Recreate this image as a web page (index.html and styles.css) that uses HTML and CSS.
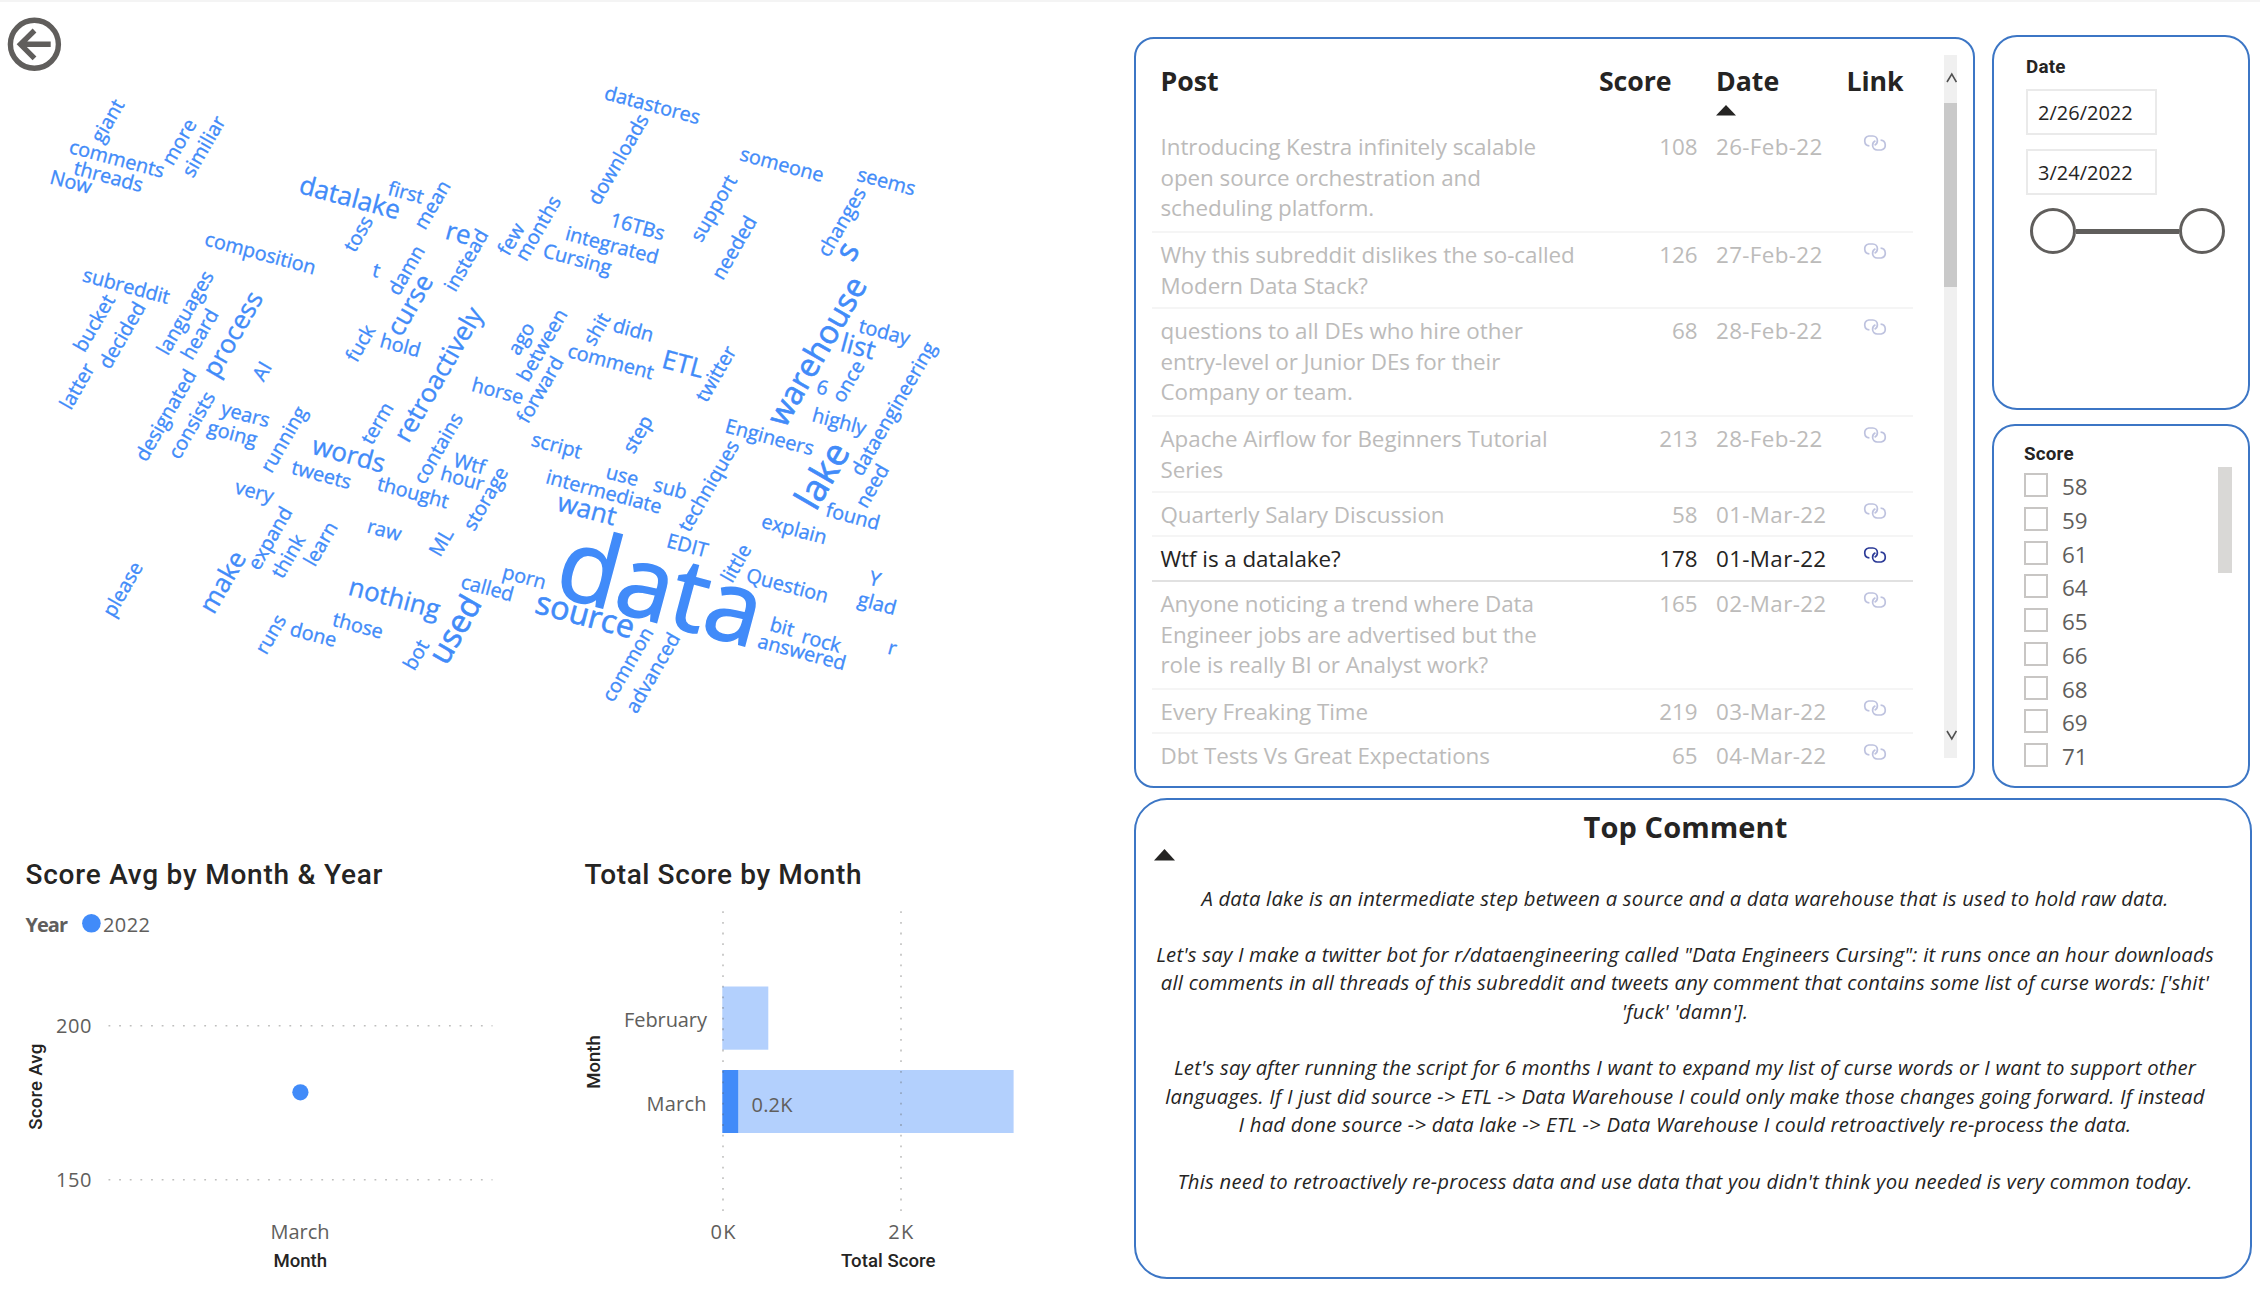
FILE: index.html
```html
<!DOCTYPE html>
<html lang="en">
<head>
<meta charset="utf-8">
<title>Data Engineering Posts Report</title>
<link rel="stylesheet" href="styles.css">
</head>
<body>
<svg class="defs" width="0" height="0" aria-hidden="true">
  <symbol id="link" viewBox="0 0 24 16">
    <path d="M6.4 10.9A5 5 0 0 1 5.8 1H9.8A4.7 4.7 0 0 1 14.4 5.7A5 5 0 0 1 11.6 10.2"/>
    <path d="M17.6 5.1A5 5 0 0 1 18.2 15H14.2A4.7 4.7 0 0 1 9.6 10.3A5 5 0 0 1 12.4 5.8"/>
  </symbol>
</svg>
<main class="report">
  <section class="left">
    <svg class="cloud" viewBox="0 0 1134 840">
      <g class="back">
        <circle cx="34.4" cy="44.3" r="24"/>
        <path d="M50.7 44.3H20M34.5 30.5L20.5 44.3L34.5 58.3"/>
      </g>
      <g class="words" transform="translate(-1 0)">
        <text transform="translate(110 121.7) rotate(-60)">giant</text>
        <text transform="translate(117.5 160.2) rotate(15)">comments</text>
        <text transform="translate(109 178) rotate(15)">threads</text>
        <text transform="translate(71.5 183.5) rotate(15)">Now</text>
        <text transform="translate(181.4 142.7) rotate(-60)">more</text>
        <text transform="translate(206 147.2) rotate(-60)">similiar</text>
        <text class="m" transform="translate(350.4 199.5) rotate(15)">datalake</text>
        <text transform="translate(406.5 194) rotate(15)">first</text>
        <text transform="translate(434.5 205.7) rotate(-60)">mean</text>
        <text transform="translate(360.7 234.5) rotate(-60)">toss</text>
        <text class="m" transform="translate(459 235) rotate(15)">re</text>
        <text transform="translate(377 271.7) rotate(15)">t</text>
        <text transform="translate(408.6 271) rotate(-60)">damn</text>
        <text transform="translate(468.5 261) rotate(-60)">instead</text>
        <text transform="translate(513.5 240) rotate(-60)">few</text>
        <text transform="translate(540.5 229) rotate(-60)">months</text>
        <text transform="translate(261 254.7) rotate(15)">composition</text>
        <text transform="translate(127 287.5) rotate(15)">subreddit</text>
        <text transform="translate(96.5 324) rotate(-60)">bucket</text>
        <text transform="translate(124.4 336) rotate(-60)">decided</text>
        <text transform="translate(187.5 313.5) rotate(-60)">languages</text>
        <text transform="translate(202 335) rotate(-60)">heard</text>
        <text class="m" transform="translate(235.4 335) rotate(-60)">process</text>
        <text transform="translate(264.5 372) rotate(-60)">AI</text>
        <text class="m" transform="translate(412.5 306) rotate(-60)">curse</text>
        <text transform="translate(362.8 344) rotate(-60)">fuck</text>
        <text transform="translate(401 347) rotate(15)">hold</text>
        <text class="m" transform="translate(441 375.5) rotate(-60)">retroactively</text>
        <text transform="translate(523.5 339.3) rotate(-60)">ago</text>
        <text transform="translate(544.5 346) rotate(-60)">between</text>
        <text transform="translate(542.5 390.5) rotate(-60)">forward</text>
        <text transform="translate(79.5 387) rotate(-60)">latter</text>
        <text transform="translate(168 416) rotate(-60)">designated</text>
        <text transform="translate(194 426) rotate(-60)">consists</text>
        <text transform="translate(246 416) rotate(15)">years</text>
        <text transform="translate(233 435) rotate(15)">going</text>
        <text transform="translate(286 440.2) rotate(-60)">running</text>
        <text transform="translate(379.5 424) rotate(-60)">term</text>
        <text class="m" transform="translate(349.3 456.5) rotate(15)">words</text>
        <text transform="translate(322 476.2) rotate(15)">tweets</text>
        <text transform="translate(255 493) rotate(15)">very</text>
        <text transform="translate(413.6 494) rotate(15)">thought</text>
        <text transform="translate(440.5 449) rotate(-60)">contains</text>
        <text transform="translate(470 465.2) rotate(15)">Wtf</text>
        <text transform="translate(463 480.2) rotate(15)">hour</text>
        <text transform="translate(488 499.3) rotate(-60)">storage</text>
        <text transform="translate(385 531.7) rotate(15)">raw</text>
        <text transform="translate(443.5 543.2) rotate(-60)">ML</text>
        <text transform="translate(272.3 539) rotate(-60)">expand</text>
        <text transform="translate(290.7 557) rotate(-60)">think</text>
        <text transform="translate(323 544.7) rotate(-60)">learn</text>
        <text class="m" transform="translate(225.4 583) rotate(-60)">make</text>
        <text transform="translate(125 590) rotate(-60)">please</text>
        <text class="m" transform="translate(395 600) rotate(15)">nothing</text>
        <text transform="translate(358.5 627) rotate(15)">those</text>
        <text transform="translate(273 635) rotate(-60)">runs</text>
        <text transform="translate(314 636) rotate(15)">done</text>
        <text transform="translate(418.5 655.7) rotate(-60)">bot</text>
        <text class="l" transform="translate(458 630.7) rotate(-60)">used</text>
        <text transform="translate(488 589.5) rotate(15)">called</text>
        <text transform="translate(525 578.5) rotate(15)">porn</text>
        <text transform="translate(653 106.5) rotate(15)">datastores</text>
        <text transform="translate(620.7 160) rotate(-60)">downloads</text>
        <text transform="translate(782.5 166) rotate(15)">someone</text>
        <text transform="translate(887 183) rotate(15)">seems</text>
        <text transform="translate(716 209) rotate(-60)">support</text>
        <text transform="translate(638 228) rotate(15)">16TBs</text>
        <text transform="translate(612.7 246.7) rotate(15)">integrated</text>
        <text transform="translate(578 260.7) rotate(15)">Cursing</text>
        <text transform="translate(736.5 248.5) rotate(-60)">needed</text>
        <text transform="translate(844 222.7) rotate(-60)">changes</text>
        <text class="l" transform="translate(850.2 252.3) rotate(-60)">s</text>
        <text transform="translate(599 330) rotate(-60)">shit</text>
        <text transform="translate(634 331.5) rotate(15)">didn</text>
        <text transform="translate(611.4 363) rotate(15)">comment</text>
        <text class="m" transform="translate(683.7 366) rotate(15)">ETL</text>
        <text transform="translate(718.2 374.5) rotate(-60)">twitter</text>
        <text class="l" transform="translate(820 352.5) rotate(-60)">warehouse</text>
        <text transform="translate(885 333.5) rotate(15)">today</text>
        <text class="m" transform="translate(858.6 348.5) rotate(15)">list</text>
        <text transform="translate(823 389) rotate(15)">6</text>
        <text transform="translate(850.5 382) rotate(-60)">once</text>
        <text transform="translate(895.7 409.5) rotate(-60)">dataengineering</text>
        <text transform="translate(498.3 392.5) rotate(15)">horse</text>
        <text transform="translate(557.3 447) rotate(15)">script</text>
        <text transform="translate(640 435) rotate(-60)">step</text>
        <text transform="translate(623 477) rotate(15)">use</text>
        <text transform="translate(671 490) rotate(15)">sub</text>
        <text transform="translate(604.5 493.3) rotate(15)">intermediate</text>
        <text class="m" transform="translate(587.5 511.3) rotate(15)">want</text>
        <text transform="translate(711 486.7) rotate(-60)">techniques</text>
        <text transform="translate(770.3 438.7) rotate(15)">Engineers</text>
        <text transform="translate(840 423) rotate(15)">highly</text>
        <text class="xl" transform="translate(825.7 477) rotate(-60)">lake</text>
        <text transform="translate(874.5 486.7) rotate(-60)">need</text>
        <text transform="translate(853.5 518) rotate(15)">found</text>
        <text transform="translate(794.8 530.7) rotate(15)">explain</text>
        <text transform="translate(688 547) rotate(15)">EDIT</text>
        <text transform="translate(738.5 564) rotate(-60)">little</text>
        <text transform="translate(788 587) rotate(15)">Question</text>
        <text transform="translate(875.5 580.5) rotate(15)">Y</text>
        <text transform="translate(877.7 605) rotate(15)">glad</text>
        <text transform="translate(782.7 628.5) rotate(15)">bit</text>
        <text transform="translate(822 642.5) rotate(15)">rock</text>
        <text transform="translate(802.5 653.7) rotate(15)">answered</text>
        <text transform="translate(893 649.5) rotate(15)">r</text>
        <text transform="translate(630 665) rotate(-60)">common</text>
        <text transform="translate(655 673.5) rotate(-60)">advanced</text>
        <text class="l" transform="translate(585.5 617.3) rotate(15)">source</text>
        <text class="huge" transform="translate(660 595.5) rotate(15)">data</text>
      </g>
    </svg>
    <div class="charts">
      <svg class="chart" width="560" height="450" viewBox="0 840 560 450">
        <text class="title" x="25.5" y="883.8" textLength="357">Score Avg by Month &amp; Year</text>
        <text class="label strong" x="25.5" y="931.7" textLength="42.5">Year</text>
        <circle class="accent" cx="91.4" cy="923.3" r="9.3"/>
        <text class="label" x="103" y="931.7" textLength="47">2022</text>
        <text class="label" x="56" y="1032.7" textLength="35.5">200</text>
        <text class="label" x="56" y="1186.7" textLength="35.5">150</text>
        <path class="grid" d="M108.5 1025.7H492.5M108.5 1179.7H492.5"/>
        <circle class="accent" cx="300.4" cy="1092.3" r="8.1"/>
        <text class="axis" transform="translate(42 1129.8) rotate(-90)" textLength="86">Score Avg</text>
        <text class="label" x="270.5" y="1239" textLength="59">March</text>
        <text class="axis" x="273.5" y="1266.7" textLength="53.5">Month</text>
      </svg>
      <svg class="chart" width="520" height="450" viewBox="560 840 520 450">
        <text class="title" x="584.5" y="883.8" textLength="277">Total Score by Month</text>
        <rect class="soft" x="722.3" y="986.5" width="46" height="63.2"/>
        <rect class="soft" x="738.3" y="1070" width="275.3" height="63"/>
        <rect class="accent" x="722.3" y="1070" width="16" height="63"/>
        <path class="grid" d="M723 911.3V1212M901 911.3V1212"/>
        <text class="label" x="624" y="1026.7" textLength="83">February</text>
        <text class="label" x="646.5" y="1111" textLength="60">March</text>
        <text class="label" x="751.5" y="1111.7" textLength="41">0.2K</text>
        <text class="axis" transform="translate(600 1088.7) rotate(-90)" textLength="53.5">Month</text>
        <text class="label" x="710.5" y="1239" textLength="25">0K</text>
        <text class="label" x="888.3" y="1239" textLength="25">2K</text>
        <text class="axis" x="841" y="1266.7" textLength="94.5">Total Score</text>
      </svg>
    </div>
  </section>

  <section class="right">
    <div class="top">
      <div class="card posts">
        <div class="table">
          <div class="row head"><span>Post</span><span class="score">Score</span><span class="date">Date<i class="sort"></i></span><span>Link</span></div>
          <div class="row n3"><span>Introducing Kestra infinitely scalable<br>open source orchestration and<br>scheduling platform.</span><span class="score">108</span><span class="date">26-Feb-22</span><svg class="link"><use href="#link"/></svg></div>
          <div class="row n2"><span>Why this subreddit dislikes the so-called<br>Modern Data Stack?</span><span class="score">126</span><span class="date">27-Feb-22</span><svg class="link"><use href="#link"/></svg></div>
          <div class="row n3"><span>questions to all DEs who hire other<br>entry-level or Junior DEs for their<br>Company or team.</span><span class="score">68</span><span class="date">28-Feb-22</span><svg class="link"><use href="#link"/></svg></div>
          <div class="row n2"><span>Apache Airflow for Beginners Tutorial<br>Series</span><span class="score">213</span><span class="date">28-Feb-22</span><svg class="link"><use href="#link"/></svg></div>
          <div class="row"><span>Quarterly Salary Discussion</span><span class="score">58</span><span class="date">01-Mar-22</span><svg class="link"><use href="#link"/></svg></div>
          <div class="row selected"><span>Wtf is a datalake?</span><span class="score">178</span><span class="date">01-Mar-22</span><svg class="link"><use href="#link"/></svg></div>
          <div class="row n3"><span>Anyone noticing a trend where Data<br>Engineer jobs are advertised but the<br>role is really BI or Analyst work?</span><span class="score">165</span><span class="date">02-Mar-22</span><svg class="link"><use href="#link"/></svg></div>
          <div class="row"><span>Every Freaking Time</span><span class="score">219</span><span class="date">03-Mar-22</span><svg class="link"><use href="#link"/></svg></div>
          <div class="row last"><span>Dbt Tests Vs Great Expectations</span><span class="score">65</span><span class="date">04-Mar-22</span><svg class="link"><use href="#link"/></svg></div>
        </div>
        <div class="scrollbar">
          <svg width="13" height="12" viewBox="0 0 13 12"><path d="M3 10L7.8 2L12.4 10"/></svg>
          <div class="thumb"></div>
          <svg class="down" width="13" height="12" viewBox="0 0 13 12"><path d="M3 2L7.8 10L12.4 2"/></svg>
        </div>
      </div>
      <div class="side">
        <div class="card dates">
          <h3>Date</h3>
          <div class="field">2/26/2022</div>
          <div class="field">3/24/2022</div>
          <div class="slider"><i class="knob"></i><i class="track"></i><i class="knob"></i></div>
        </div>
        <div class="card scores">
          <div>
            <h3>Score</h3>
            <ul>
              <li><i></i>58</li><li><i></i>59</li><li><i></i>61</li>
              <li><i></i>64</li><li><i></i>65</li><li><i></i>66</li>
              <li><i></i>68</li><li><i></i>69</li><li><i></i>71</li>
            </ul>
          </div>
          <div class="thumb"></div>
        </div>
      </div>
    </div>
    <div class="card comment">
      <h2>Top Comment</h2>
      <i class="sort"></i>
      <p>A data lake is an intermediate step between a source and a data warehouse that is used to hold raw data.</p>
      <p>Let's say I make a twitter bot for r/dataengineering called "Data Engineers Cursing": it runs once an hour downloads<br>all comments in all threads of this subreddit and tweets any comment that contains some list of curse words: ['shit'<br>'fuck' 'damn'].</p>
      <p>Let's say after running the script for 6 months I want to expand my list of curse words or I want to support other<br>languages. If I just did source -&gt; ETL -&gt; Data Warehouse I could only make those changes going forward. If instead<br>I had done source -&gt; data lake -&gt; ETL -&gt; Data Warehouse I could retroactively re-process the data.</p>
      <p>This need to retroactively re-process data and use data that you didn't think you needed is very common today.</p>
    </div>
  </section>
</main>
</body>
</html>
```
FILE: styles.css
```css
* { box-sizing: border-box; margin: 0; padding: 0; }

body {
  width: 2260px;
  height: 1290px;
  overflow: hidden;
  background: #fff;
  color: #252423;
  font-family: "Open Sans", "Noto Sans", sans-serif;
}

.defs { position: absolute; }

.report {
  display: grid;
  grid-template-columns: 1134px 1fr;
  height: 1290px;
  border-top: 2px solid #f4f4f4;
}

/* Word cloud */
.left { margin-top: -2px; }
.cloud { display: block; width: 1134px; height: 840px; }
.back { fill: none; stroke: #605e5c; stroke-width: 5.4; }
.words {
  fill: #418bf9;
  stroke: #418bf9;
  stroke-width: .35;
  font-size: 19.8px;
  text-anchor: middle;
  dominant-baseline: middle;
}
.words .m { font-size: 26px; }
.words .l { font-size: 32.2px; stroke-width: .6; }
.words .xl { font-size: 37px; stroke-width: .7; }
.words .huge { font-size: 100px; stroke-width: 1.6; }

/* Charts */
.charts { display: flex; }
.chart { display: block; }
.title { font: 500 28px Roboto, sans-serif; fill: #252423; }
.axis { font: 500 18.6px Roboto, sans-serif; fill: #252423; }
.label { font-size: 20px; fill: #605e5c; }
.strong { font-weight: 700; }
.accent { fill: #418bf9; }
.soft { fill: #b3d0fd; }
.grid {
  fill: none;
  stroke: #605e5c;
  stroke-opacity: .4;
  stroke-width: 1.6;
  stroke-dasharray: 1.8 8.84;
}

/* Cards */
.right { padding-top: 33px; }
.top { display: flex; gap: 17px; margin-bottom: 10px; }
.card { border: 2px solid #3c76c5; background: #fff; }

.posts {
  display: flex;
  justify-content: space-between;
  width: 841px;
  height: 751px;
  margin-top: 2px;
  padding: 16px 16px 0 16px;
  border-radius: 20px;
}
.table { width: 761px; padding-top: 7px; }
.row {
  display: grid;
  grid-template-columns: 401px 136px 149px 56px;
  height: 44px;
  padding: 7px 0 0 8.5px;
  border-bottom: 2px solid #f5f5f5;
  font-size: 22.4px;
  line-height: 30.6px;
  letter-spacing: -.05px;
  color: #bcbbba;
  white-space: nowrap;
}
.row .score { text-align: right; }
.row .date { padding-left: 18.5px; letter-spacing: .35px; }
.row.n2 { height: 76px; }
.row.n3 { height: 108px; }
.row.last { border: 0; }
.row.selected { height: 45px; color: #252423; border-color: #e1e1e1; }
.row.head {
  height: 63px;
  padding-top: 1px;
  border: 0;
  color: #252423;
  font-size: 26.7px;
  font-weight: 700;
  line-height: 36px;
}
.row.head .score { padding-right: 26px; }
.row.head .date { letter-spacing: 0; }
.sort {
  display: block;
  width: 20px;
  height: 10.5px;
  background: currentColor;
  clip-path: polygon(50% 0, 100% 100%, 0 100%);
}
.head .sort { margin-top: 6px; }
.link {
  width: 24px;
  height: 16px;
  margin: 3px 0 0 16px;
  fill: none;
  stroke: #2b3a97;
  stroke-width: 1.7;
  opacity: .3;
}
.selected .link { opacity: 1; }

.scrollbar {
  display: flex;
  flex-direction: column;
  width: 13px;
  height: 703px;
  padding-top: 17px;
  background: #f0f0f0;
}
.scrollbar svg { fill: none; stroke: #505050; stroke-width: 1.6; }
.scrollbar .thumb { height: 184px; margin-top: 19px; background: #c9c9c9; }
.scrollbar .down { margin-top: auto; margin-bottom: 17px; }

.side { display: flex; flex-direction: column; gap: 14px; width: 258px; }
h3 { font: 700 18.8px/22px Roboto, sans-serif; letter-spacing: .2px; }

.dates { height: 375px; padding: 19px 0 0 32px; border-radius: 25px; }
.field {
  width: 131px;
  height: 46px;
  margin-top: 11px;
  padding-left: 10px;
  border: 2px solid #eaeaea;
  font-size: 20px;
  line-height: 44px;
}
.field + .field { margin-top: 14px; }
.slider { display: flex; align-items: center; margin: 13px 0 0 4px; }
.knob { width: 46px; height: 46px; border: 3.5px solid #605e5c; border-radius: 50%; }
.track { width: 103px; height: 5px; background: #605e5c; }

.scores {
  display: flex;
  justify-content: space-between;
  height: 364px;
  padding: 17px 16px 0 30px;
  border-radius: 23px;
}
.scores .thumb { width: 14px; height: 106px; margin-top: 24px; background: #d9d8d6; }
.scores ul { margin-top: 6px; list-style: none; }
.scores li {
  display: flex;
  gap: 14px;
  height: 33.75px;
  padding-top: 1px;
  font-size: 22.4px;
  line-height: 30px;
  color: #605e5c;
}
.scores li i { width: 24px; height: 24px; margin-top: 1px; border: 2px solid #c8c6c4; }

.comment {
  width: 1118px;
  height: 481px;
  padding: 8px 17px 0;
  border-radius: 33px;
  text-align: center;
}
.comment h2 { margin-right: 15px; font-size: 29px; line-height: 38px; letter-spacing: .1px; }
.comment .sort { width: 21px; height: 11.5px; margin: 3px 0 23px 1px; }
.comment p {
  margin: 0 16px 28.3px 0;
  font-size: 20.3px;
  font-style: italic;
  line-height: 28.35px;
  letter-spacing: .21px;
  white-space: nowrap;
}
```
